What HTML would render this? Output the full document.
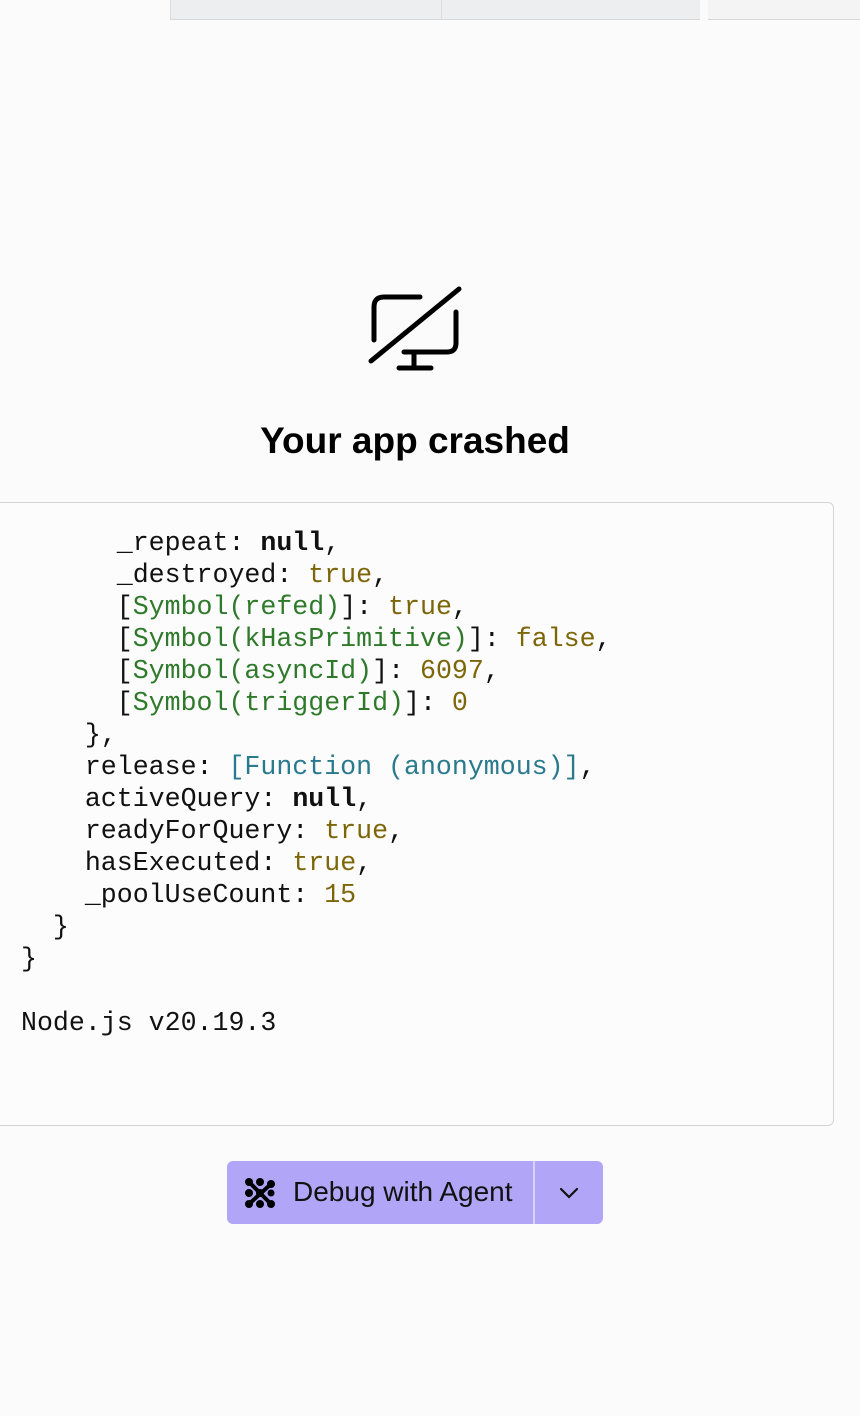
<!DOCTYPE html>
<html><head><style>
html,body{margin:0;padding:0;background:#fbfbfb;width:860px;height:1416px;overflow:hidden;position:relative;font-family:"Liberation Sans",sans-serif}
.tab{position:absolute;top:0;height:19px;background:#edeeef;border-bottom:1px solid #d8d8d8}
pre{position:absolute;left:-10px;top:502px;width:844px;height:624px;margin:0;box-sizing:border-box;border:1.5px solid #d4d4d4;border-radius:6px;background:#fcfcfc;font-family:"Liberation Mono",monospace;font-size:26.6px;line-height:32px;padding:24px 0 0 30px;color:#111}
b{font-weight:bold}
.g{color:#2e7a2a}.o{color:#7d6608}.t{color:#2a7a8e}
h1{position:absolute;top:420px;left:0;width:830px;text-align:center;margin:0;font-size:37px;font-weight:600;color:#000}
.btn{position:absolute;left:227px;top:1161px;width:376px;height:63px;background:#b0a5f7;border-radius:6px;}
.sep{position:absolute;left:306px;top:0;width:2px;height:63px;background:#d8d2fb}
.lbl{position:absolute;left:66px;top:15px;font-size:28px;color:#111}
</style></head><body>
<div class="tab" style="left:170px;width:270px;border-left:1px solid #ddd"></div>
<div class="tab" style="left:441px;width:258px;border-left:1px solid #ddd"></div>
<div class="tab" style="left:708px;width:152px;background:#f3f4f3"></div>
<svg style="position:absolute;left:360px;top:280px" width="110" height="95" viewBox="360 280 110 95" fill="none" stroke="#000" stroke-width="5" stroke-linecap="round">
<path d="M420 297 H384 Q374 297 374 307 V340"/>
<path d="M456 312 V343 Q456 352 447 352 H404"/>
<path d="M371 361 L459 289"/>
<path d="M414 352 V366 M399 368 H431"/>
</svg>
<h1>Your app crashed</h1>
<pre>      _repeat: <b>null</b>,
      _destroyed: <span class="o">true</span>,
      [<span class="g">Symbol(refed)</span>]: <span class="o">true</span>,
      [<span class="g">Symbol(kHasPrimitive)</span>]: <span class="o">false</span>,
      [<span class="g">Symbol(asyncId)</span>]: <span class="o">6097</span>,
      [<span class="g">Symbol(triggerId)</span>]: <span class="o">0</span>
    },
    release: <span class="t">[Function (anonymous)]</span>,
    activeQuery: <b>null</b>,
    readyForQuery: <span class="o">true</span>,
    hasExecuted: <span class="o">true</span>,
    _poolUseCount: <span class="o">15</span>
  }
}

Node.js v20.19.3</pre>
<div class="btn">
<svg style="position:absolute;left:17px;top:16px" width="33" height="33" viewBox="0 0 33 33" fill="#000">
<circle cx="5" cy="5" r="4"/><circle cx="16" cy="5" r="4"/><circle cx="27" cy="7" r="4"/>
<circle cx="5" cy="16" r="4"/><circle cx="16" cy="16" r="4"/><circle cx="27" cy="16" r="3.5"/>
<circle cx="5" cy="27" r="4"/><circle cx="16" cy="27" r="4"/><circle cx="27" cy="27" r="4"/>
<path d="M5 5 L27 27 M5 27 L27 7" stroke="#000" stroke-width="4"/>
</svg>
<div class="lbl">Debug with Agent</div>
<div class="sep"></div>
<svg style="position:absolute;left:332px;top:25px" width="20" height="14" viewBox="0 0 20 14" fill="none" stroke="#111" stroke-width="2.2" stroke-linecap="round"><path d="M2 3 L10 11 L18 3"/></svg>
</div>
</body></html>
